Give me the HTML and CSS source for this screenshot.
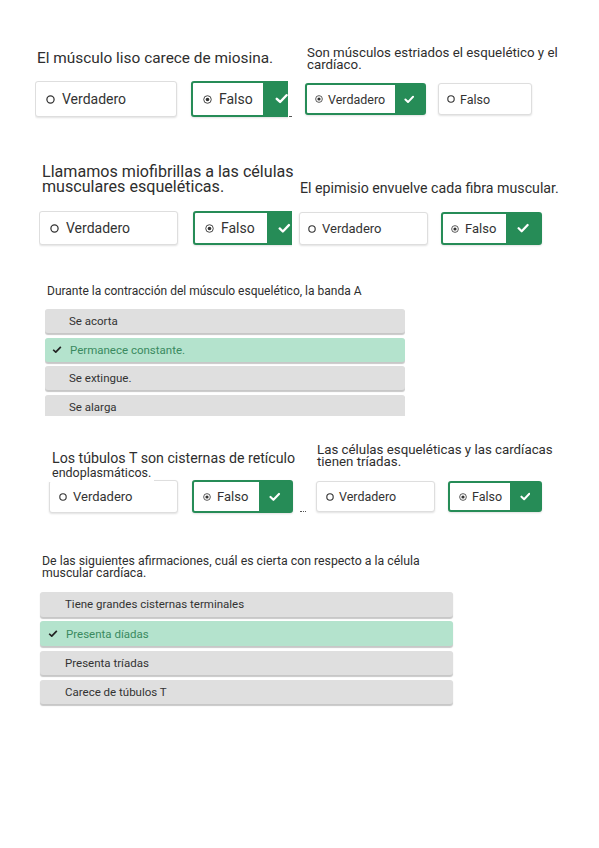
FILE: index.html
```html
<!DOCTYPE html>
<html lang="es">
<head>
    <meta charset="utf-8">
    <link rel="stylesheet" href="styles.css">
</head>
<body>
<div class="sheet">

    <div class="row row-1">
        <section class="tf tf-a">
            <p class="q">El músculo liso carece de miosina.</p>
            <div class="choices">
                <div class="choice">
                    <svg class="radio" viewBox="0 0 10 10"><circle cx="5" cy="5" r="4" fill="none" stroke="currentColor" stroke-width="1.4"/></svg>
                    Verdadero
                </div>
                <div class="choice picked">
                    <svg class="radio" viewBox="0 0 10 10"><circle cx="5" cy="5" r="4.2" fill="none" stroke="currentColor" stroke-width="1"/><circle cx="5" cy="5" r="2" fill="currentColor"/></svg>
                    Falso
                    <span class="ok"><svg viewBox="0 0 12 10"><path d="M1.6 5.2 L4.6 8.1 L10.4 2" fill="none" stroke="#fff" stroke-width="2.2" stroke-linecap="round" stroke-linejoin="round"/></svg></span>
                </div>
            </div>
        </section>
        <span class="crumb crumb-a"></span>
        <section class="tf tf-b">
            <p class="q">Son músculos estriados el esquelético y el<br>cardíaco.</p>
            <div class="choices">
                <div class="choice picked">
                    <svg class="radio" viewBox="0 0 10 10"><circle cx="5" cy="5" r="4.2" fill="none" stroke="currentColor" stroke-width="1"/><circle cx="5" cy="5" r="2" fill="currentColor"/></svg>
                    Verdadero
                    <span class="ok"><svg viewBox="0 0 12 10"><path d="M1.6 5.2 L4.6 8.1 L10.4 2" fill="none" stroke="#fff" stroke-width="2.2" stroke-linecap="round" stroke-linejoin="round"/></svg></span>
                </div>
                <div class="choice">
                    <svg class="radio" viewBox="0 0 10 10"><circle cx="5" cy="5" r="4" fill="none" stroke="currentColor" stroke-width="1.4"/></svg>
                    Falso
                </div>
            </div>
        </section>
    </div>

    <div class="row row-2">
        <section class="tf tf-c">
            <p class="q">Llamamos miofibrillas a las células<br>musculares esqueléticas.</p>
            <div class="choices">
                <div class="choice">
                    <svg class="radio" viewBox="0 0 10 10"><circle cx="5" cy="5" r="4" fill="none" stroke="currentColor" stroke-width="1.4"/></svg>
                    Verdadero
                </div>
                <div class="choice picked">
                    <svg class="radio" viewBox="0 0 10 10"><circle cx="5" cy="5" r="4.2" fill="none" stroke="currentColor" stroke-width="1"/><circle cx="5" cy="5" r="2" fill="currentColor"/></svg>
                    Falso
                    <span class="ok"><svg viewBox="0 0 12 10"><path d="M1.6 5.2 L4.6 8.1 L10.4 2" fill="none" stroke="#fff" stroke-width="2.2" stroke-linecap="round" stroke-linejoin="round"/></svg></span>
                </div>
            </div>
        </section>
        <section class="tf tf-d">
            <p class="q">El epimisio envuelve cada fibra muscular.</p>
            <div class="choices">
                <div class="choice">
                    <svg class="radio" viewBox="0 0 10 10"><circle cx="5" cy="5" r="4" fill="none" stroke="currentColor" stroke-width="1.4"/></svg>
                    Verdadero
                </div>
                <div class="choice picked">
                    <svg class="radio" viewBox="0 0 10 10"><circle cx="5" cy="5" r="4.2" fill="none" stroke="currentColor" stroke-width="1"/><circle cx="5" cy="5" r="2" fill="currentColor"/></svg>
                    Falso
                    <span class="ok"><svg viewBox="0 0 12 10"><path d="M1.6 5.2 L4.6 8.1 L10.4 2" fill="none" stroke="#fff" stroke-width="2.2" stroke-linecap="round" stroke-linejoin="round"/></svg></span>
                </div>
            </div>
        </section>
    </div>

    <div class="row row-3">
        <section class="mc mc-e">
            <p class="q">Durante la contracción del músculo esquelético, la banda A</p>
            <div class="opts">
                <div class="opt">Se acorta</div>
                <div class="opt right"><svg class="tick" viewBox="0 0 12 10"><path d="M1.4 5.3 L4.5 8.2 L10.6 1.8" fill="none" stroke="currentColor" stroke-width="2" stroke-linejoin="round"/></svg>Permanece constante.</div>
                <div class="opt">Se extingue.</div>
                <div class="opt">Se alarga</div>
            </div>
        </section>
    </div>

    <div class="row row-4">
        <section class="tf tf-f">
            <p class="q">Los túbulos T son cisternas de retículo</p>
            <p class="q-sub">endoplasmáticos.</p>
            <div class="choices">
                <div class="choice">
                    <svg class="radio" viewBox="0 0 10 10"><circle cx="5" cy="5" r="4" fill="none" stroke="currentColor" stroke-width="1.4"/></svg>
                    Verdadero
                </div>
                <div class="choice picked">
                    <svg class="radio" viewBox="0 0 10 10"><circle cx="5" cy="5" r="4.2" fill="none" stroke="currentColor" stroke-width="1"/><circle cx="5" cy="5" r="2" fill="currentColor"/></svg>
                    Falso
                    <span class="ok"><svg viewBox="0 0 12 10"><path d="M1.6 5.2 L4.6 8.1 L10.4 2" fill="none" stroke="#fff" stroke-width="2.2" stroke-linecap="round" stroke-linejoin="round"/></svg></span>
                </div>
            </div>
        </section>
        <span class="crumb crumb-f"></span>
        <section class="tf tf-g">
            <p class="q">Las células esqueléticas y las cardíacas<br>tienen tríadas.</p>
            <div class="choices">
                <div class="choice">
                    <svg class="radio" viewBox="0 0 10 10"><circle cx="5" cy="5" r="4" fill="none" stroke="currentColor" stroke-width="1.4"/></svg>
                    Verdadero
                </div>
                <div class="choice picked">
                    <svg class="radio" viewBox="0 0 10 10"><circle cx="5" cy="5" r="4.2" fill="none" stroke="currentColor" stroke-width="1"/><circle cx="5" cy="5" r="2" fill="currentColor"/></svg>
                    Falso
                    <span class="ok"><svg viewBox="0 0 12 10"><path d="M1.6 5.2 L4.6 8.1 L10.4 2" fill="none" stroke="#fff" stroke-width="2.2" stroke-linecap="round" stroke-linejoin="round"/></svg></span>
                </div>
            </div>
        </section>
    </div>

    <div class="row row-5">
        <section class="mc mc-h">
            <p class="q">De las siguientes afirmaciones, cuál es cierta con respecto a la célula<br>muscular cardíaca.</p>
            <div class="opts">
                <div class="opt">Tiene grandes cisternas terminales</div>
                <div class="opt right"><svg class="tick" viewBox="0 0 12 10"><path d="M1.4 5.3 L4.5 8.2 L10.6 1.8" fill="none" stroke="currentColor" stroke-width="2" stroke-linejoin="round"/></svg>Presenta díadas</div>
                <div class="opt">Presenta tríadas</div>
                <div class="opt">Carece de túbulos T</div>
            </div>
        </section>
    </div>

</div>
</body>
</html>
```

FILE: styles.css
```css
body {
    margin: 0;
    background: #fff;
    font-family: Roboto, "Noto Sans", sans-serif;
    color: #2e2e2e;
}

.sheet {
    width: 599px;
    height: 848px;
    overflow: hidden;
}

.row {
    display: flex;
    align-items: flex-start;
}

.row-1 { height: 130px; }
.row-2 { height: 140px; }
.row-3 { height: 160px; }
.row-4 { height: 110px; }

/* true / false cards */

.tf {
    flex: none;
    width: var(--w, auto);
}

.q {
    margin: 0;
    padding-left: var(--qx, 0);
    font-size: var(--qfs);
    line-height: var(--qlh);
    white-space: nowrap;
}

.choices {
    display: flex;
    gap: var(--gap);
    margin-top: var(--qgap);
}

/* the cut-out pictures end before the green part does */
.tf-a .choices,
.tf-c .choices {
    width: var(--w);
    overflow: hidden;
    padding-bottom: 3px;
    margin-bottom: -3px;
}

.choice {
    flex: none;
    box-sizing: border-box;
    height: var(--h);
    display: flex;
    align-items: center;
    gap: var(--rgap);
    padding-left: var(--pad);
    font-size: var(--fs);
    color: #333;
    background: #fff;
    border: 1px solid #dedede;
    border-radius: 3px;
    box-shadow: 0 1px 2px rgba(0, 0, 0, .12);
}

.choice:first-child { width: var(--a); }
.choice:last-child { width: var(--b); }

.choice.picked {
    border: 2px solid #268c57;
}

.radio {
    flex: none;
    width: var(--r);
    height: var(--r);
}

.ok {
    margin-left: auto;
    align-self: stretch;
    width: var(--ok);
    background: #268c57;
    display: flex;
    align-items: center;
    justify-content: center;
}

.ok svg {
    width: calc(var(--ok) * .36);
}

.crumb {
    flex: none;
    height: 0;
    border-top: 1px dotted #555;
}

.crumb-a { width: 2px; margin: 116px 0 0 1px; }
.crumb-f { width: 6px; margin: 81px 0 0 5px; }

.tf-a {
    --w: 253px;
    margin: 49px 0 0 35px;
    --qfs: 15.4px; --qlh: 18px; --qx: 2px; --qgap: 14px;
    --h: 36px; --a: 142px; --b: 111px; --gap: 14px; --ok: 37px;
    --fs: 14px; --pad: 10px; --rgap: 7px; --r: 9px;
}

.tf-b {
    margin: 47px 0 0 14px;
    --qfs: 13.3px; --qlh: 12px; --qx: 2px; --qgap: 12px;
    --h: 32px; --a: 121px; --b: 94px; --gap: 12px; --ok: 29px;
    --fs: 12.5px; --pad: 8px; --rgap: 5px; --r: 8px;
}

.tf-c {
    --w: 253px;
    margin: 35px 0 0 39px;
    --qfs: 16.1px; --qlh: 14.5px; --qx: 3px; --qgap: 17px;
    --h: 34px; --a: 139px; --b: 111px; --gap: 15px; --ok: 35px;
    --fs: 14px; --pad: 10px; --rgap: 7px; --r: 9px;
}

.tf-d {
    margin: 50px 0 0 7px;
    --qfs: 14.2px; --qlh: 16px; --qx: 1px; --qgap: 16px;
    --h: 33px; --a: 129px; --b: 101px; --gap: 13px; --ok: 34px;
    --fs: 13px; --pad: 8px; --rgap: 6px; --r: 8px;
}

.tf-f {
    --w: 246px;
    margin: 20px 0 0 49px;
    --qfs: 14.2px; --qlh: 16px; --qx: 3px; --qgap: 0px;
    --h: 33px; --a: 129px; --b: 101px; --gap: 14px; --ok: 32px;
    --fs: 13px; --pad: 9px; --rgap: 6px; --r: 8px;
}

.q-sub {
    position: relative;
    z-index: 1;
    width: max-content;
    margin: 0 0 -2px;
    padding: 0 3px 2px;
    font-size: 12.5px;
    line-height: 14px;
    background: #fff;
}

.tf-g {
    margin: 14px 0 0 10px;
    --qfs: 13.3px; --qlh: 11.5px; --qx: 1px; --qgap: 14px;
    --h: 31px; --a: 119px; --b: 94px; --gap: 13px; --ok: 30px;
    --fs: 12.5px; --pad: 9px; --rgap: 5px; --r: 8px;
}

/* multiple choice lists */

.mc .opts {
    display: flex;
    flex-direction: column;
    gap: var(--og);
    width: var(--lw);
    margin-top: var(--qgap);
}

.opt {
    flex: none;
    height: var(--oh);
    display: flex;
    align-items: center;
    padding-left: var(--opad);
    font-size: 11.5px;
    color: #333;
    background: #dfdfdf;
    border-radius: 3px;
    box-shadow: 0 1.5px 1px rgba(0, 0, 0, .22);
}

.opt.right {
    padding-left: var(--tpad);
    gap: 8px;
    background: #b4e3cd;
    color: #3a8a5f;
}

.tick {
    flex: none;
    width: 10px;
    height: 9px;
    color: #222;
}

.mc-e {
    margin: 14px 0 0 45px;
    --qfs: 12px; --qlh: 14px; --qx: 2px; --qgap: 11px;
    --lw: 360px; --oh: 24px; --og: 4.7px; --opad: 24px; --tpad: 7px;
}

.mc-e .opts {
    height: 107px;
    overflow: hidden;
}

.mc-h {
    margin: 15px 0 0 40px;
    --qfs: 12.3px; --qlh: 12px; --qx: 2px; --qgap: 13px;
    --lw: 413px; --oh: 24.5px; --og: 4.8px; --opad: 25px; --tpad: 8px;
}
```
